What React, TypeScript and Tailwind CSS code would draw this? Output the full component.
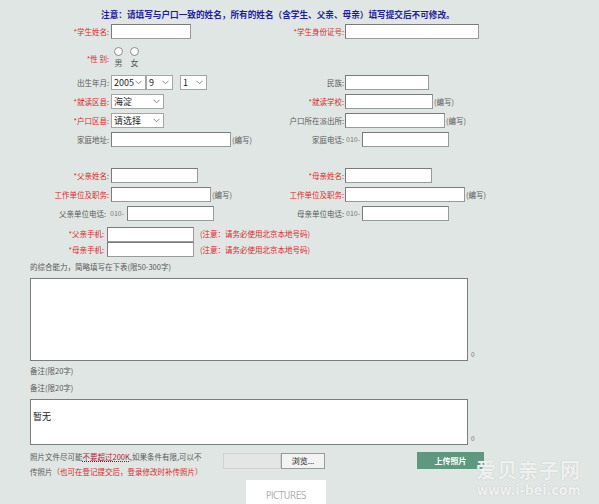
import React from 'react';

const red = 'text-[#e0262a]';
const gray = 'text-[#5a5a5a]';

const Input = ({ w, className = '' }: { w: string; className?: string }) => (
  <div className={`${w} h-[15px] bg-white border border-[#9a9a9a] border-t-[#7a7a7a] border-l-[#7a7a7a] ${className}`} />
);

const Select = ({ w, value, className = '' }: { w: string; value: string; className?: string }) => (
  <div className={`${w} h-[15px] bg-white border border-[#a5a5a5] flex items-center justify-between pl-[2px] pr-[3px] ${className}`}>
    <span className="text-[9px] leading-none text-[#222]">{value}</span>
    <svg width="7" height="5" viewBox="0 0 7 5">
      <path d="M0.5 0.8 L3.5 3.8 L6.5 0.8" fill="none" stroke="#777" strokeWidth="0.9" />
    </svg>
  </div>
);

const Hint = ({ children }: { children: React.ReactNode }) => (
  <span className={`text-[7.5px] ${gray} ml-[1px]`}>{children}</span>
);

interface RowProps {
  l?: string;
  lRed?: boolean;
  left?: React.ReactNode;
  r?: string;
  rRed?: boolean;
  right?: React.ReactNode;
  h?: string;
}

const Row: React.FC<RowProps> = ({ l, lRed, left, r, rRed, right, h = 'h-[19px]' }) => (
  <div className={`flex items-center ${h}`}>
    <div className={`w-[109px] text-right text-[7.5px] ${lRed ? red : gray}`}>{l}</div>
    <div className="w-[163px] pl-[2px] flex items-center">{left}</div>
    <div className={`w-[72px] text-right text-[7.5px] ${rRed ? red : gray}`}>{r}</div>
    <div className="flex-1 pl-[1px] flex items-center">{right}</div>
  </div>
);

const Zip = ({ className = '' }: { className?: string }) => (
  <span className={`text-[7px] text-[#777] ${className}`}>010-</span>
);

export default function App() {
  return (
    <div
      className="relative w-[599px] h-[504px] overflow-hidden bg-[#dfe6e3]"
      style={{ fontFamily: '"Noto Sans CJK SC", "Noto Sans", sans-serif' }}
    >
      <div className="pt-[8px] h-[22px] pl-[101px] text-[8.65px] font-bold text-[#1e1e9c] leading-[12px]">
        注意：请填写与户口一致的姓名，所有的姓名（含学生、父亲、母亲）填写提交后不可修改。
      </div>

      <Row l="*学生姓名:" lRed left={<Input w="w-[80px]" />} r="*学生身份证号:" rRed right={<Input w="w-[134px]" />} />

      <div className="flex h-[28px] mt-[1px]">
        <div className={`w-[109px] text-right text-[7.5px] ${red} pt-[11px]`}>*性 别:</div>
        <div className="pl-[5px] flex gap-[7px]">
          {['男', '女'].map(s => (
            <div key={s} className="flex flex-col items-center">
              <div className="w-[9px] h-[9px] mt-[5px] rounded-full bg-white border border-[#8a8a8a]" />
              <span className={`text-[8px] leading-[10px] mt-[2px] ${gray}`}>{s}</span>
            </div>
          ))}
        </div>
      </div>

      <div className="mt-[3px]">
        <Row
          l="出生年月:"
          left={
            <>
              <Select w="w-[35px]" value="2005" />
              <Select w="w-[27px]" value="9" />
              <Select w="w-[27px]" value="1" className="ml-[7px]" />
            </>
          }
          r="民族:"
          right={<Input w="w-[84px]" />}
        />
        <Row l="*就读区县:" lRed left={<Select w="w-[53px]" value="海淀" />} r="*就读学校:" rRed right={<><Input w="w-[88px]" /><Hint>(编写)</Hint></>} />
        <Row l="*户口区县:" lRed left={<Select w="w-[53px]" value="请选择" />} r="户口所在派出所:" right={<><Input w="w-[100px]" /><Hint>(编写)</Hint></>} />
        <Row
          l="家庭地址:"
          left={<><Input w="w-[120px]" /><Hint>(编写)</Hint></>}
          r="家庭电话:"
          right={<><Zip className="ml-[1px] w-[16px]" /><Input w="w-[87px]" /></>}
        />
      </div>

      <div className="mt-[17px]">
        <Row l="*父亲姓名:" lRed left={<Input w="w-[87px]" />} r="*母亲姓名:" rRed right={<Input w="w-[87px]" />} />
        <Row l="工作单位及职务:" lRed left={<><Input w="w-[100px]" /><Hint>(编写)</Hint></>} r="工作单位及职务:" rRed right={<><Input w="w-[120px]" /><Hint>(编写)</Hint></>} />
        <div className="flex items-center h-[19px]">
          <div className={`w-[106px] text-right text-[7.5px] ${gray}`}>父亲单位电话:</div>
          <Zip className="ml-[4px] w-[17px]" />
          <Input w="w-[87px]" />
          <div className={`w-[130px] text-right text-[7.5px] ${gray}`}>母亲单位电话:</div>
          <Zip className="ml-[2px] w-[16px]" />
          <Input w="w-[87px]" />
        </div>
        {['*父亲手机:', '*母亲手机:'].map((s, i) => (
          <div key={s} className={`flex items-center ${i === 0 ? 'h-[16px] mt-[3px]' : 'h-[15px]'}`}>
            <div className={`w-[104px] text-right text-[7.5px] ${red}`}>{s}</div>
            <Input w="w-[87px]" className="ml-[3px]" />
            <span className={`text-[7.5px] ${red} ml-[6px]`}>(注意：请务必使用北京本地号码)</span>
          </div>
        ))}
      </div>

      <div className="pl-[30px] mt-[5px]">
        <div className={`text-[7.5px] ${gray} leading-[10px]`}>的综合能力，简略填写在下表(限50-300字)</div>
        <div className="flex items-end mt-[6px]">
          <div className="w-[438px] h-[83px] bg-white border border-[#7c7c7c]" />
          <span className="text-[6.5px] text-[#777] ml-[3px] mb-[1px]">0</span>
        </div>
        <div className={`text-[7.5px] ${gray} leading-[10px] mt-[5px]`}>备注(限20字)</div>
        <div className={`text-[7.5px] ${gray} leading-[10px] mt-[7px]`}>备注(限20字)</div>
        <div className="flex items-end mt-[6px]">
          <div className="w-[438px] h-[46px] bg-white border border-[#7c7c7c] px-[2px] pt-[1px]">
            <span className="text-[9px] text-[#222]">暂无</span>
          </div>
          <span className="text-[6.5px] text-[#777] ml-[3px] mb-[1px]">0</span>
        </div>
        <div className="flex mt-[4px]">
          <div className={`w-[186px] text-[7.5px] ${gray} leading-[15px]`}>
            <div>
              照片文件尽可能
              <span className="text-[#b0203a] underline decoration-dotted decoration-[#333]">不要超过200K</span>
              ,如果条件有限,可以不
            </div>
            <div>
              传照片<span className={red}>（也可在登记提交后，登录修改时补传照片）</span>
            </div>
          </div>
          <div className="ml-[7px] mt-[4px] flex h-[16px]">
            <div className="w-[58px] h-[16px] bg-[#e4e6e5] border border-[#cfd3d1]" />
            <div className="w-[44px] h-[16px] bg-[#f3f3f3] border border-[#9a9a9a] text-[8px] text-[#222] flex items-center justify-center">
              浏览...
            </div>
          </div>
          <div className="ml-[92px] mt-[3px] w-[67px] h-[17px] bg-[#5f987f] text-white text-[8px] font-bold flex items-center justify-center">
            上传照片
          </div>
        </div>
        <div className="ml-[216px] mt-[1px] w-[80px] h-[30px] bg-white flex justify-center pt-[11px]">
          <span className="text-[10px] text-[#b5b5b5] tracking-[-0.5px] leading-none" style={{ fontFamily: '"DejaVu Sans Condensed", "Liberation Sans", sans-serif' }}>
            PICTURES
          </span>
        </div>
      </div>

      <div className="absolute left-[476px] top-[459px] flex flex-col items-center gap-[3px] text-white/80" style={{ textShadow: '0 0 1px #aab2ae' }}>
        <span className="text-[20px] font-bold leading-[21px] tracking-[1px]">爱贝亲子网</span>
        <span className="text-[14px] font-bold leading-[15px]" style={{ fontFamily: '"DejaVu Sans Condensed", sans-serif' }}>www.i-bei.com</span>
      </div>
    </div>
  );
}
